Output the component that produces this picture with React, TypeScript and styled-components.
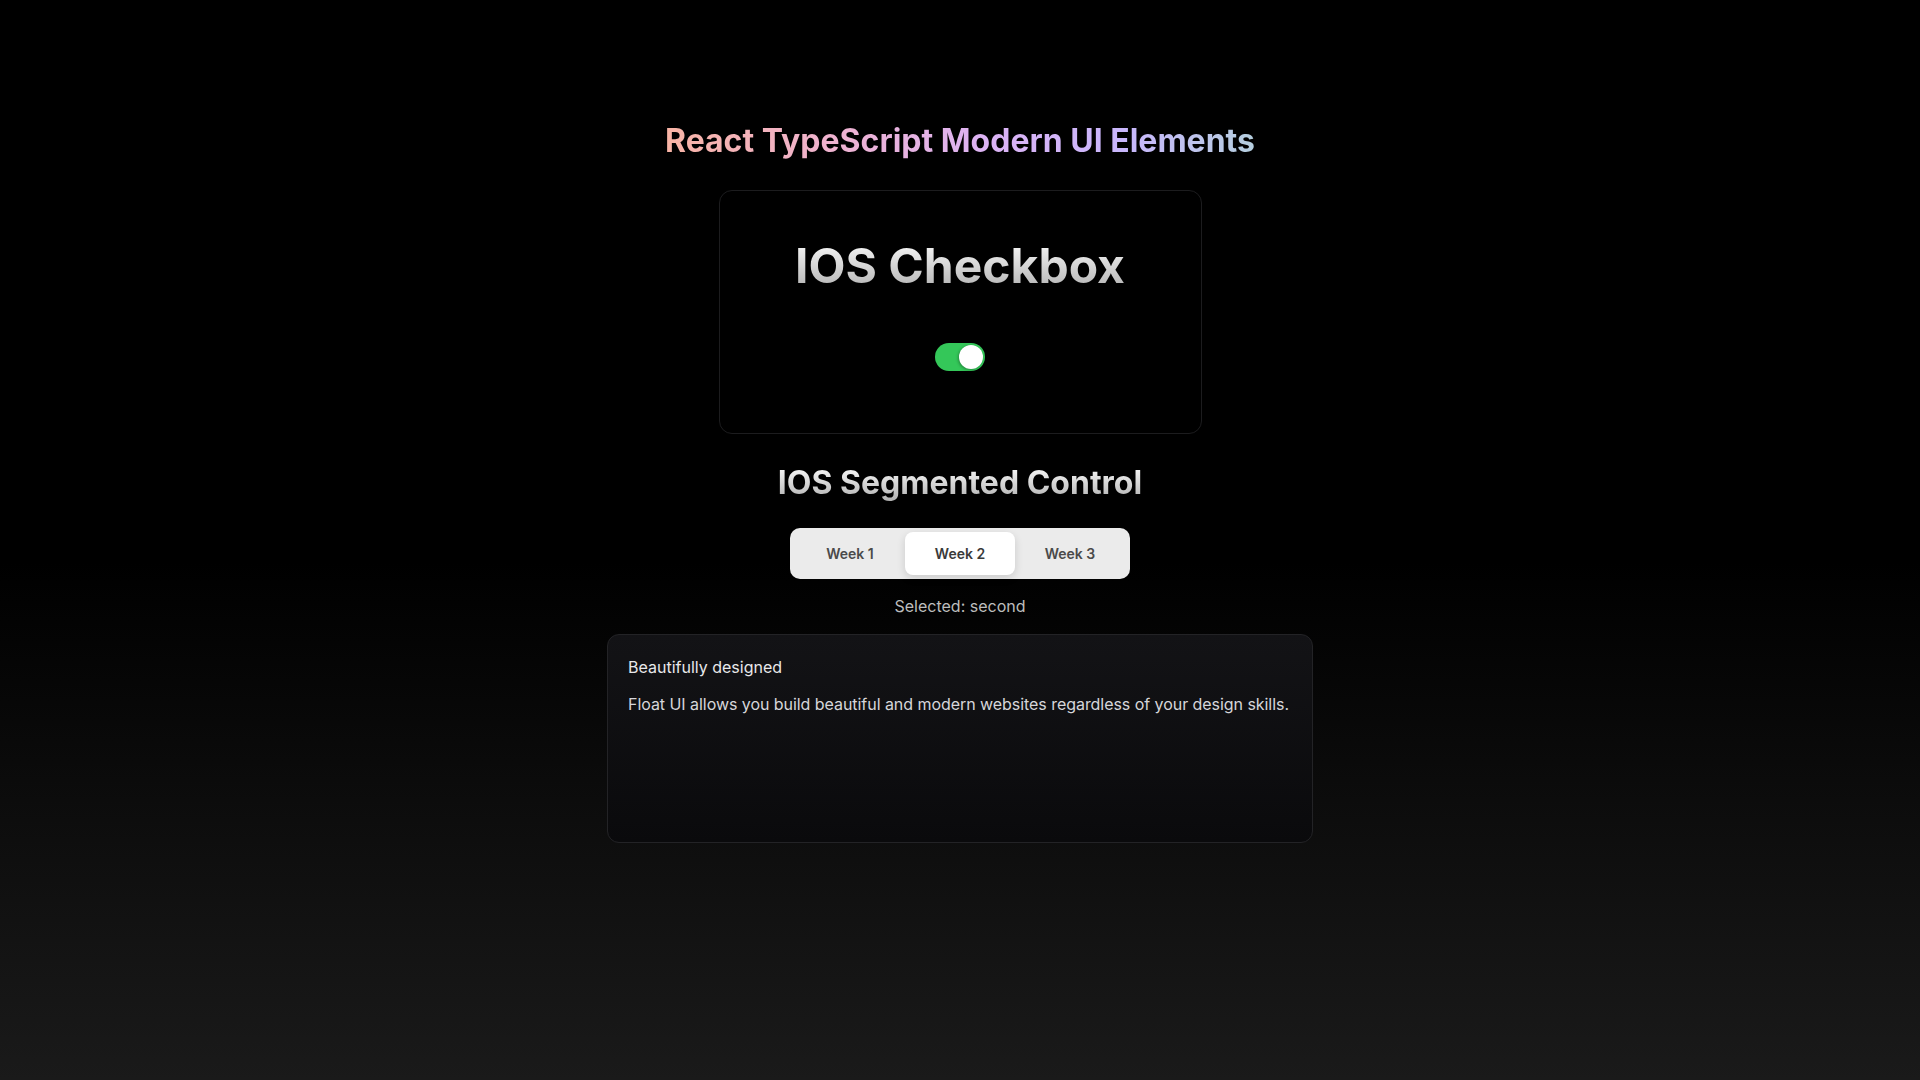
import React, { useState } from 'react';
import styled, { createGlobalStyle } from 'styled-components';

const GlobalStyle = createGlobalStyle`
  * {
    box-sizing: border-box;
  }

  html, body {
    margin: 0;
    padding: 0;
  }

  body {
    min-height: 100vh;
    font-family: Inter, "Noto Sans", sans-serif;
    background: linear-gradient(to bottom, #000 52%, #1a1a1a 100%);
    color: #e4e4e7;
  }
`;

const Page = styled.main`
  min-height: 100vh;
  display: flex;
  flex-direction: column;
  align-items: center;
  padding-top: 122px;
`;

const PageTitle = styled.h1`
  margin: 0;
  font-size: 32px;
  line-height: 1.2;
  font-weight: 700;
  background: linear-gradient(90deg, #f9b4a5 0%, #eeb2d2 30%, #dcb3f5 55%, #c8b6fc 78%, #b5cfdf 100%);
  -webkit-background-clip: text;
  background-clip: text;
  color: transparent;
`;

const CheckboxCard = styled.section`
  margin-top: 30px;
  width: 483px;
  height: 244px;
  display: flex;
  flex-direction: column;
  align-items: center;
  gap: 48px;
  padding-top: 46px;
  background: #000;
  border: 1px solid #1c1c1e;
  border-radius: 13px;
`;

const SilverHeading = styled.h2<{ size: number }>`
  margin: 0;
  font-size: ${p => p.size}px;
  line-height: 1.2;
  font-weight: 700;
  background: linear-gradient(to bottom, #f2f2f2 15%, #b4b4b4 90%);
  -webkit-background-clip: text;
  background-clip: text;
  color: transparent;
`;

const SectionHeading = styled(SilverHeading)`
  margin-top: 30px;
`;

const Track = styled.button<{ checked: boolean }>`
  position: relative;
  width: 50px;
  height: 28px;
  padding: 0;
  border: none;
  border-radius: 14px;
  background: ${p => (p.checked ? '#34c759' : '#3a3a3c')};
  cursor: pointer;
  transition: background 0.2s ease;
`;

const Knob = styled.span<{ checked: boolean }>`
  position: absolute;
  top: 2px;
  left: ${p => (p.checked ? '24px' : '2px')};
  width: 24px;
  height: 24px;
  border-radius: 50%;
  background: #fff;
  box-shadow: -1px 1px 3px rgba(0, 0, 0, 0.3);
  transition: left 0.2s ease;
`;

const Segments = styled.div`
  margin-top: 25px;
  display: flex;
  padding: 4px 5px;
  background: #ebebeb;
  border-radius: 10px;
`;

const Segment = styled.button<{ active: boolean }>`
  width: 110px;
  height: 43px;
  border: none;
  border-radius: 8px;
  font-family: Inter, "Noto Sans", sans-serif;
  font-size: 14px;
  font-weight: 600;
  color: ${p => (p.active ? '#3a3a3a' : '#4a4a4a')};
  background: ${p => (p.active ? '#fff' : 'transparent')};
  box-shadow: ${p => (p.active ? '0 3px 8px rgba(0, 0, 0, 0.14)' : 'none')};
  cursor: pointer;
`;

const SelectedLabel = styled.p`
  margin: 15px 0 0;
  font-size: 16px;
  line-height: 24px;
  color: #bdbdbd;
`;

const FeatureCard = styled.article`
  margin-top: 16px;
  min-width: 706px;
  height: 209px;
  padding: 20px 20px;
  background: linear-gradient(to bottom, #131316 0%, #0a0a0c 100%);
  border: 1px solid #232326;
  border-radius: 12px;
`;

const FeatureTitle = styled.h3`
  margin: 0;
  font-size: 16px;
  line-height: 24px;
  font-weight: 400;
  color: #e8e8ea;
`;

const FeatureText = styled.p`
  margin: 13px 0 0;
  font-size: 16px;
  line-height: 24px;
  letter-spacing: -0.05px;
  white-space: nowrap;
  color: #d6d6da;
`;

const weeks = [
  { id: 'first', label: 'Week 1' },
  { id: 'second', label: 'Week 2' },
  { id: 'third', label: 'Week 3' },
];

export default function App() {
  const [checked, setChecked] = useState(true);
  const [selected, setSelected] = useState('second');

  return (
    <>
      <GlobalStyle />
      <Page>
        <PageTitle>React TypeScript Modern UI Elements</PageTitle>

        <CheckboxCard>
          <SilverHeading size={48}>IOS Checkbox</SilverHeading>
          <Track checked={checked} onClick={() => setChecked(c => !c)} aria-pressed={checked}>
            <Knob checked={checked} />
          </Track>
        </CheckboxCard>

        <SectionHeading as="h2" size={32}>IOS Segmented Control</SectionHeading>
        <Segments>
          {weeks.map(w => (
            <Segment key={w.id} active={selected === w.id} onClick={() => setSelected(w.id)}>
              {w.label}
            </Segment>
          ))}
        </Segments>
        <SelectedLabel>Selected: {selected}</SelectedLabel>

        <FeatureCard>
          <FeatureTitle>Beautifully designed</FeatureTitle>
          <FeatureText>
            Float UI allows you build beautiful and modern websites regardless of your design skills.
          </FeatureText>
        </FeatureCard>
      </Page>
    </>
  );
}
